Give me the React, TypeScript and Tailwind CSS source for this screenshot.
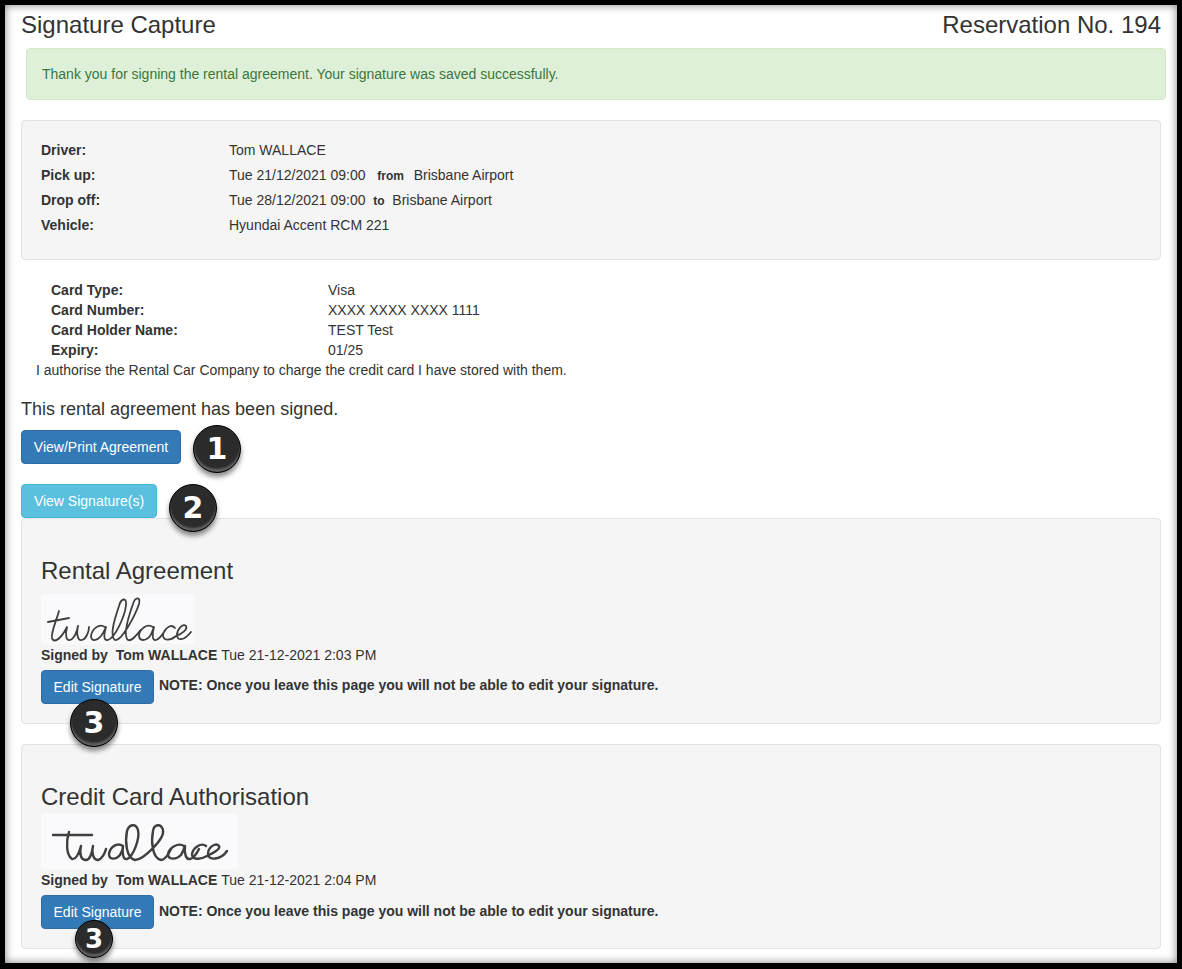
import React from 'react';

function NumberBadge({ n, className }: { n: number; className: string }) {
  return (
    <div className={`absolute z-10 flex items-center justify-center rounded-full bg-[#2b2b2b] border border-black text-white font-bold shadow-[0_4px_5px_rgba(0,0,0,0.45),inset_0_-3px_2px_rgba(255,255,255,0.25)] font-['DejaVu_Sans'] ${className}`}>
      {n}
    </div>
  );
}

function Signature1() {
  return (
    <svg width="154" height="50" viewBox="0 0 154 50" fill="none" stroke="#3f3f3f" strokeWidth="1.8" strokeLinecap="round" strokeLinejoin="round">
      <path d="M18 17 C15 28 10 38 11 44 C12 49 19 47 26 33 C24 41 25 47 29 46 C33 45 36 38 37 32 C35 41 37 47 41 46 C45 45 48 38 48 33 M7 28 L28 24" />
      <path d="M64 33 C58 29 51 35 50 42 C50 48 56 47 60 42 C63 38 64 35 65 33 C63 40 62 47 67 46 C74 44 84 22 85 11 C86 3 80 4 78 12 C74 24 68 42 74 46 C80 48 94 22 98 10 C100 2 94 3 92 10 C87 24 82 42 87 46 C91 48 96 40 100 36" />
      <path d="M112 33 C106 29 99 35 98 41 C98 48 105 47 109 42 C111 39 112 35 113 33 C111 40 111 47 115 46 C119 45 122 40 125 35 M134 34 C130 29 123 35 122 41 C122 47 129 47 135 42 C141 40 147 35 145 32 C142 29 136 35 136 41 C136 47 143 47 150 38" />
    </svg>
  );
}

function Signature2() {
  return (
    <svg width="197" height="56" viewBox="0 0 197 56" fill="none" stroke="#3f3f3f" strokeWidth="2.4" strokeLinecap="round" strokeLinejoin="round">
      <path d="M12 22 L51 22 M28 19 C25 28 25 42 31 46 C35 47 38 40 40 33 C38 41 40 47 45 47 C49 47 51 40 52 33 C50 41 53 47 57 47 C61 46 64 40 65 36" />
      <path d="M82 33 C76 29 69 34 68 41 C68 47 75 47 79 42 C81 39 82 36 82 33 C81 40 82 47 86 46 C92 44 99 26 97 17 C95 10 88 11 86 18 C84 28 85 45 94 47 C102 47 124 26 122 17 C120 10 113 11 112 18 C110 28 111 45 120 47 C125 47 128 40 130 36" />
      <path d="M143 33 C137 29 128 35 127 41 C127 47 135 47 140 42 C142 39 143 36 144 33 C143 40 145 47 149 46 C153 45 156 40 158 36 M165 33 C160 29 152 35 151 41 C151 47 159 47 166 43 C172 40 180 36 178 33 C175 29 167 34 167 41 C167 48 180 47 186 38" />
    </svg>
  );
}

function SignatureWell({ title, sigClass, when, sig, titleGap, noteGap, children }: {
  title: string; sigClass: string; when: string; sig: React.ReactNode; titleGap: string; noteGap: string; children?: React.ReactNode;
}) {
  return (
    <div className="relative rounded border border-[#e3e3e3] bg-[#f5f5f5] px-[19px] pt-[39px] pb-[19px]">
      <h3 className={`text-[24px] leading-[26px] text-[#333] ${titleGap}`}>{title}</h3>
      <div className={`rounded-sm bg-[#fafafc] ${sigClass}`}>{sig}</div>
      <div className="mt-[1px] h-[20px] leading-[20px] font-bold"><span>Signed by&nbsp; Tom WALLACE</span> <span className="font-normal">{when}</span></div>
      <div className="mt-[5px] flex items-start">
        <button className="h-[34px] w-[113px] rounded border border-[#2e6da4] bg-[#337ab7] text-white text-[14px]">Edit Signature</button>
        <span className={`ml-[5px] font-bold ${noteGap}`}>NOTE: Once you leave this page you will not be able to edit your signature.</span>
      </div>
      {children}
    </div>
  );
}

export default function App() {
  return (
    <div className="relative h-[969px] w-[1182px] overflow-hidden border-t-[5px] border-b-[6px] border-x-[5px] border-black bg-white text-[14px] leading-[20px] text-[#333] font-['Liberation_Sans',Arial,sans-serif] shadow-[inset_0_0_8px_rgba(0,0,0,0.5)]">
      <div className="pl-[16px] pr-[16px]">
        {/* Header */}
        <div className="flex items-center justify-between h-[39px] pt-[1px] text-[24px] leading-[26px]">
          <span>Signature Capture</span>
          <span>Reservation No. 194</span>
        </div>

        {/* Success alert */}
        <div className="ml-[5px] mr-[-5px] mt-[4px] h-[52px] rounded border border-[#d6e9c6] bg-[#dff0d8] pl-[15px] flex items-center text-[#3c763d]">
          Thank you for signing the rental agreement. Your signature was saved successfully.
        </div>

        {/* Trip details */}
        <div className="mt-[20px] h-[140px] rounded border border-[#e3e3e3] bg-[#f5f5f5] pl-[19px] pt-[16px]">
          <div className="grid grid-cols-[188px_1fr] auto-rows-[25px] items-center">
            <b>Driver:</b>
            <span>Tom WALLACE</span>
            <b>Pick up:</b>
            <span>Tue 21/12/2021 09:00 &nbsp;<b className="ml-[4px] mr-[2px] text-[12px] leading-none">from</b>&nbsp; Brisbane Airport</span>
            <b>Drop off:</b>
            <span>Tue 28/12/2021 09:00 &nbsp;<b className="text-[12px] leading-none">to</b>&nbsp; Brisbane Airport</span>
            <b>Vehicle:</b>
            <span>Hyundai Accent RCM 221</span>
          </div>
        </div>

        {/* Card details */}
        <div className="mt-[20px] pl-[30px] grid grid-cols-[277px_1fr] auto-rows-[20px]">
          <b>Card Type:</b>
          <span>Visa</span>
          <b>Card Number:</b>
          <span>XXXX XXXX XXXX 1111</span>
          <b>Card Holder Name:</b>
          <span>TEST Test</span>
          <b>Expiry:</b>
          <span>01/25</span>
        </div>
        <p className="pl-[15px]">I authorise the Rental Car Company to charge the credit card I have stored with them.</p>

        <p className="mt-[17px] text-[18px] leading-[24px]">This rental agreement has been signed.</p>

        <div className="relative mt-[9px] h-[34px]">
          <button className="h-[34px] w-[160px] rounded border border-[#2e6da4] bg-[#337ab7] text-white">View/Print Agreement</button>
          <NumberBadge n={1} className="left-[172px] top-[-5px] h-[48px] w-[48px] text-[30px]" />
        </div>

        <div className="relative mt-[20px] h-[34px]">
          <button className="h-[34px] w-[136px] rounded border border-[#46b8da] bg-[#5bc0de] text-white">View Signature(s)</button>
          <NumberBadge n={2} className="left-[148px] top-0 h-[48px] w-[48px] text-[30px]" />
        </div>

        <SignatureWell title="Rental Agreement" sigClass="w-[154px] h-[50px]" when="Tue 21-12-2021 2:03 PM" sig={<Signature1 />} titleGap="mb-[10px]" noteGap="mt-[5px]">
          <NumberBadge n={3} className="left-[48px] top-[180px] h-[48px] w-[48px] text-[30px]" />
        </SignatureWell>

        <div className="h-[20px]" />

        <SignatureWell title="Credit Card Authorisation" sigClass="w-[197px] h-[56px]" when="Tue 21-12-2021 2:04 PM" sig={<Signature2 />} titleGap="mb-[3px]" noteGap="mt-[6px]">
          <NumberBadge n={3} className="left-[53px] top-[175px] h-[38px] w-[38px] text-[26px]" />
        </SignatureWell>
      </div>
    </div>
  );
}
